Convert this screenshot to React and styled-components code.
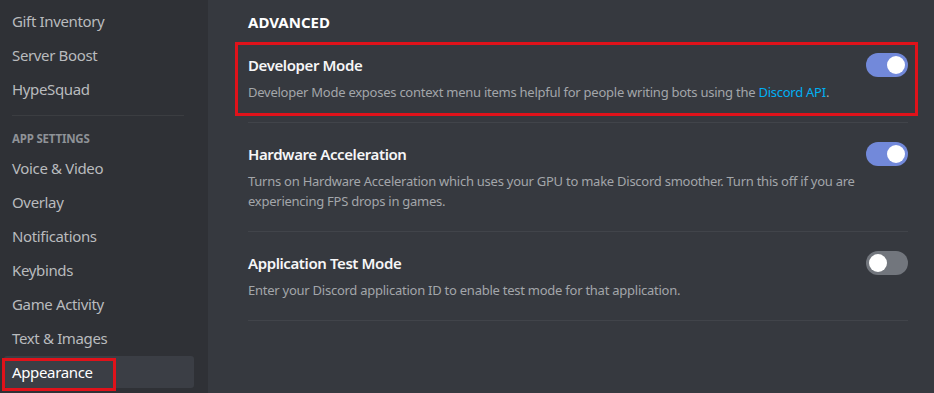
import React, { useState } from 'react';
import styled, { createGlobalStyle } from 'styled-components';

const GlobalStyle = createGlobalStyle`
  html, body {
    margin: 0;
    padding: 0;
    background: #36393f;
  }
  * {
    box-sizing: border-box;
  }
`;

const sidebarTop = ['Gift Inventory', 'Server Boost', 'HypeSquad'];
const appSettings = [
  'Voice & Video',
  'Overlay',
  'Notifications',
  'Keybinds',
  'Game Activity',
  'Text & Images',
  'Appearance'
];

const App = () => {
  const [settings, setSettings] = useState({
    developer: true,
    hardware: true,
    testMode: false
  });

  const toggle = (key) => {
    setSettings((prev) => ({ ...prev, [key]: !prev[key] }));
  };

  return (
    <Layout>
      <GlobalStyle />
      <Sidebar>
        {sidebarTop.map((label) => (
          <NavItem key={label}>{label}</NavItem>
        ))}
        <NavSeparator />
        <NavHeader>App Settings</NavHeader>
        {appSettings.map((label) => (
          <NavItem key={label} $selected={label === 'Appearance'}>
            {label}
            {label === 'Appearance' && <SidebarMark />}
          </NavItem>
        ))}
      </Sidebar>

      <Content>
        <SectionTitle>Advanced</SectionTitle>

        <SettingRow>
          <RowMark />
          <RowHead>
            <RowTitle>Developer Mode</RowTitle>
            <Switch $on={settings.developer} onClick={() => toggle('developer')} />
          </RowHead>
          <RowNote>
            Developer Mode exposes context menu items helpful for people writing bots using the{' '}
            <Link>Discord API</Link>.
          </RowNote>
        </SettingRow>

        <SettingRow>
          <RowHead>
            <RowTitle>Hardware Acceleration</RowTitle>
            <Switch $on={settings.hardware} onClick={() => toggle('hardware')} />
          </RowHead>
          <RowNote>
            Turns on Hardware Acceleration which uses your GPU to make Discord smoother. Turn this off if you are experiencing FPS drops in games.
          </RowNote>
        </SettingRow>

        <SettingRow>
          <RowHead>
            <RowTitle>Application Test Mode</RowTitle>
            <Switch $on={settings.testMode} onClick={() => toggle('testMode')} />
          </RowHead>
          <RowNote>
            Enter your Discord application ID to enable test mode for that application.
          </RowNote>
        </SettingRow>
      </Content>
    </Layout>
  );
};

const Layout = styled.div`
  display: flex;
  width: 934px;
  height: 393px;
  overflow: hidden;
  font-family: 'Noto Sans', 'Open Sans', sans-serif;
`;

const Sidebar = styled.nav`
  width: 208px;
  flex-shrink: 0;
  background: #2f3136;
  padding: 5px 14px 0 4px;
  display: flex;
  flex-direction: column;
  gap: 2px;
`;

const NavItem = styled.div`
  position: relative;
  height: 32px;
  padding: 0 8px;
  display: flex;
  align-items: center;
  border-radius: 3px;
  font-size: 15px;
  letter-spacing: -0.35px;
  color: ${({ $selected }) => ($selected ? '#ffffff' : '#b9bbbe')};
  background: ${({ $selected }) => ($selected ? '#3b3e45' : 'transparent')};
  cursor: pointer;
`;

const NavSeparator = styled.div`
  height: 1px;
  margin: 8px 10px 9px 8px;
  background: rgba(255, 255, 255, 0.06);
`;

const NavHeader = styled.div`
  padding: 4px 8px 4px;
  font-size: 11.5px;
  font-weight: 700;
  letter-spacing: -0.2px;
  text-transform: uppercase;
  color: #8e9297;
`;

const SidebarMark = styled.span`
  position: absolute;
  left: -2px;
  top: 2px;
  width: 114px;
  height: 33px;
  border: 3px solid #e0121a;
  pointer-events: none;
`;

const Content = styled.main`
  flex: 1;
  padding: 12px 26px 0 40px;
`;

const SectionTitle = styled.h2`
  margin: 0 0 21px;
  height: 20px;
  line-height: 20px;
  font-size: 15px;
  font-weight: 700;
  text-transform: uppercase;
  color: #ffffff;
`;

const SettingRow = styled.section`
  position: relative;
  padding-bottom: 20px;
  margin-bottom: 19px;
  border-bottom: 1px solid rgba(255, 255, 255, 0.06);
`;

const RowMark = styled.span`
  position: absolute;
  left: -13px;
  right: -10px;
  top: -11px;
  bottom: 6px;
  border: 3px solid #e0121a;
  pointer-events: none;
`;

const RowHead = styled.div`
  display: flex;
  align-items: center;
  justify-content: space-between;
  height: 24px;
`;

const RowTitle = styled.h3`
  margin: 0;
  font-size: 15px;
  font-weight: 600;
  letter-spacing: -0.4px;
  color: #f6f6f7;
`;

const RowNote = styled.p`
  margin: 5px 0 0;
  font-size: 13px;
  line-height: 20px;
  letter-spacing: -0.25px;
  color: #a3a6aa;
`;

const Link = styled.span`
  color: #00b0f4;
  cursor: pointer;
`;

const Switch = styled.button`
  position: relative;
  width: 42px;
  height: 24px;
  border: none;
  padding: 0;
  border-radius: 12px;
  background: ${({ $on }) => ($on ? '#7289da' : '#72767d')};
  cursor: pointer;

  &::after {
    content: '';
    position: absolute;
    top: 3px;
    left: ${({ $on }) => ($on ? '21px' : '3px')};
    width: 18px;
    height: 18px;
    border-radius: 50%;
    background: #ffffff;
  }
`;

export default App;
